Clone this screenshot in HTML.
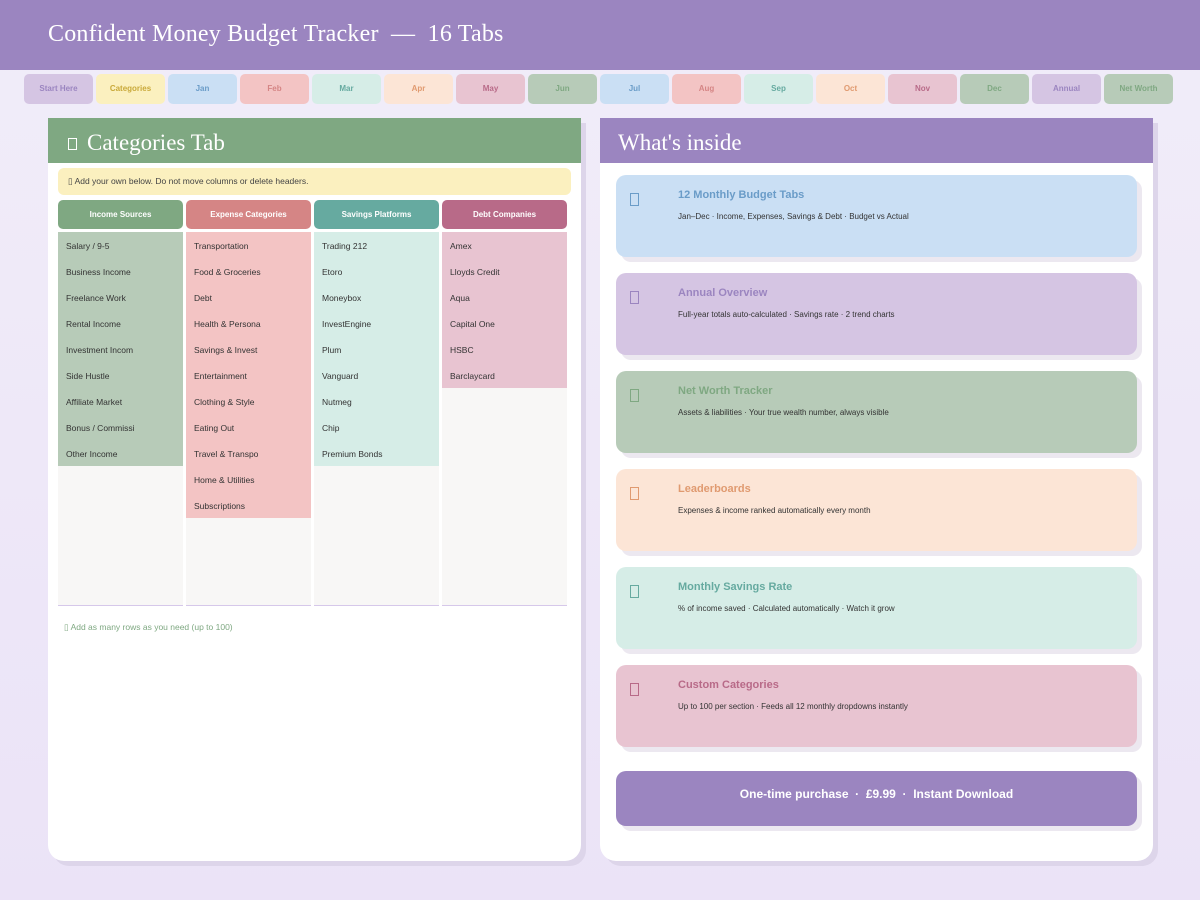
<!DOCTYPE html><html><head><style>
*{margin:0;padding:0;box-sizing:border-box}
body{width:1200px;height:900px;background:linear-gradient(#f1edf9,#ebe3f7);font-family:"Liberation Sans",sans-serif;position:relative;overflow:hidden}
.hdr{position:absolute;left:0;top:0;width:1200px;height:70px;background:#9b85c0;color:#fff;font-family:"Liberation Serif",serif;font-size:24px;padding:21px 48px;letter-spacing:0.2px}
.tab{position:absolute;top:74px;width:69px;height:30px;border-radius:5px;font-size:8px;font-weight:bold;text-align:center;line-height:29px}
.panel{position:absolute;top:118px;height:743px;background:#fff;border-radius:0 0 16px 16px;box-shadow:5px 5px 0 #ddd5ea}
.ph{height:45px;color:#fff;font-family:"Liberation Serif",serif;font-size:23px;padding:12px 18px}
.ph .bx{display:inline-block;width:9px;height:12px;border:1px solid #fff;margin:0 10px 0 2px;vertical-align:0}
.note{position:absolute;left:10px;top:50px;width:513px;height:27px;background:#fbf0bf;border-radius:6px;font-size:8.5px;color:#444;padding:8px 10px}
.col{position:absolute;top:82px;width:125px}
.ch{height:29px;border-radius:5px;color:#fff;font-size:8px;font-weight:bold;text-align:center;line-height:29px}
.cb{margin-top:3px;height:374px;background:#f8f7f6;border-bottom:1px solid #d6c8ea}
.it{height:26px;font-size:8.5px;color:#333;padding:9px 8px 0;white-space:nowrap;overflow:hidden}
.card{position:absolute;left:16px;width:521px;height:82px;border-radius:10px;box-shadow:5px 5px 0 #ece8f0;padding:14px 0 0 62px}
.card i{position:absolute;left:14px;top:18px;width:9px;height:13px;border:1px solid currentColor;font-style:normal}
.card b{display:block;font-size:11px;margin-bottom:5px}
.card span{font-size:8px;color:#333}
</style></head><body>
<div class="hdr">Confident Money Budget Tracker &nbsp;—&nbsp; 16 Tabs</div>
<div class="tab" style="left:24px;background:#d5c5e3;color:#9b85c0">Start Here</div>
<div class="tab" style="left:96px;background:#fbf0bf;color:#c9a93a">Categories</div>
<div class="tab" style="left:168px;background:#cadff4;color:#6a9cc8">Jan</div>
<div class="tab" style="left:240px;background:#f3c4c4;color:#d58585">Feb</div>
<div class="tab" style="left:312px;background:#d6ede7;color:#66aaa0">Mar</div>
<div class="tab" style="left:384px;background:#fce5d6;color:#e09a70">Apr</div>
<div class="tab" style="left:456px;background:#e8c4d1;color:#b86a88">May</div>
<div class="tab" style="left:528px;background:#b7cbb8;color:#7fa882">Jun</div>
<div class="tab" style="left:600px;background:#cadff4;color:#6a9cc8">Jul</div>
<div class="tab" style="left:672px;background:#f3c4c4;color:#d58585">Aug</div>
<div class="tab" style="left:744px;background:#d6ede7;color:#66aaa0">Sep</div>
<div class="tab" style="left:816px;background:#fce5d6;color:#e09a70">Oct</div>
<div class="tab" style="left:888px;background:#e8c4d1;color:#b86a88">Nov</div>
<div class="tab" style="left:960px;background:#b7cbb8;color:#7fa882">Dec</div>
<div class="tab" style="left:1032px;background:#d5c5e3;color:#9b85c0">Annual</div>
<div class="tab" style="left:1104px;background:#b7cbb8;color:#7fa882">Net Worth</div>

<div class="panel" style="left:48px;width:533px">
<div class="ph" style="background:#7fa882"><span class="bx"></span>Categories Tab</div>
<div class="note">▯ Add your own below. Do not move columns or delete headers.</div>
<div class="col" style="left:10px"><div class="ch" style="background:#7fa882">Income Sources</div><div class="cb"><div style="background:#b7cbb8"><div class="it">Salary / 9-5</div><div class="it">Business Income</div><div class="it">Freelance Work</div><div class="it">Rental Income</div><div class="it">Investment Incom</div><div class="it">Side Hustle</div><div class="it">Affiliate Market</div><div class="it">Bonus / Commissi</div><div class="it">Other Income</div></div></div></div>
<div class="col" style="left:138px"><div class="ch" style="background:#d58585">Expense Categories</div><div class="cb"><div style="background:#f3c4c4"><div class="it">Transportation</div><div class="it">Food &amp; Groceries</div><div class="it">Debt</div><div class="it">Health &amp; Persona</div><div class="it">Savings &amp; Invest</div><div class="it">Entertainment</div><div class="it">Clothing &amp; Style</div><div class="it">Eating Out</div><div class="it">Travel &amp; Transpo</div><div class="it">Home &amp; Utilities</div><div class="it">Subscriptions</div></div></div></div>
<div class="col" style="left:266px"><div class="ch" style="background:#66aaa0">Savings Platforms</div><div class="cb"><div style="background:#d6ede7"><div class="it">Trading 212</div><div class="it">Etoro</div><div class="it">Moneybox</div><div class="it">InvestEngine</div><div class="it">Plum</div><div class="it">Vanguard</div><div class="it">Nutmeg</div><div class="it">Chip</div><div class="it">Premium Bonds</div></div></div></div>
<div class="col" style="left:394px"><div class="ch" style="background:#b86a88">Debt Companies</div><div class="cb"><div style="background:#e8c4d1"><div class="it">Amex</div><div class="it">Lloyds Credit</div><div class="it">Aqua</div><div class="it">Capital One</div><div class="it">HSBC</div><div class="it">Barclaycard</div></div></div></div>
<div style="position:absolute;left:16px;top:504px;font-size:8.5px;color:#7fa882">▯ Add as many rows as you need (up to 100)</div>
</div>

<div class="panel" style="left:600px;width:553px">
<div class="ph" style="background:#9b85c0">What's inside</div>
<div class="card" style="top:57px;background:#cadff4;color:#6a9cc8"><i></i><b>12 Monthly Budget Tabs</b><span>Jan–Dec · Income, Expenses, Savings &amp; Debt · Budget vs Actual</span></div>
<div class="card" style="top:155px;background:#d5c5e3;color:#9b85c0"><i></i><b>Annual Overview</b><span>Full-year totals auto-calculated · Savings rate · 2 trend charts</span></div>
<div class="card" style="top:253px;background:#b7cbb8;color:#7fa882"><i></i><b>Net Worth Tracker</b><span>Assets &amp; liabilities · Your true wealth number, always visible</span></div>
<div class="card" style="top:351px;background:#fce5d6;color:#e09a70"><i></i><b>Leaderboards</b><span>Expenses &amp; income ranked automatically every month</span></div>
<div class="card" style="top:449px;background:#d6ede7;color:#66aaa0"><i></i><b>Monthly Savings Rate</b><span>% of income saved · Calculated automatically · Watch it grow</span></div>
<div class="card" style="top:547px;background:#e8c4d1;color:#b86a88"><i></i><b>Custom Categories</b><span>Up to 100 per section · Feeds all 12 monthly dropdowns instantly</span></div>
<div style="position:absolute;left:16px;top:653px;width:521px;height:55px;background:#9b85c0;border-radius:10px;box-shadow:5px 5px 0 #ece8f0;color:#fff;font-size:12px;font-weight:bold;text-align:center;padding-top:16px">One-time purchase &nbsp;·&nbsp; £9.99 &nbsp;·&nbsp; Instant Download</div>
</div>
</body></html>
